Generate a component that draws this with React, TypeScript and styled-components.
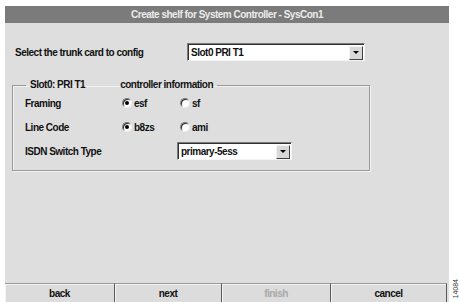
import styled, { createGlobalStyle } from "styled-components";

const GlobalStyle = createGlobalStyle`
  html, body {
    margin: 0;
    padding: 0;
    background: #ffffff;
  }
  body {
    font-family: "Liberation Sans", Arial, sans-serif;
  }
`;

const Page = styled.div`
  display: flex;
  align-items: flex-end;
  width: 459px;
  height: 302px;
  padding: 6px 0 0 5px;
  box-sizing: border-box;
`;

const Panel = styled.div`
  display: flex;
  flex-direction: column;
  width: 444px;
  height: 296px;
  background: #dedede;
  font-size: 10px;
  font-weight: bold;
  letter-spacing: -0.5px;
  color: #111;
`;

const TitleBar = styled.div`
  height: 17px;
  line-height: 17px;
  background: #7b7b7b;
  color: #ececec;
  text-align: center;
  letter-spacing: -0.5px;
`;

const TrunkRow = styled.div`
  display: flex;
  align-items: center;
  margin: 20px 0 0 10px;
  height: 18px;
`;

const TrunkLabel = styled.span`
  width: 172px;
`;

// fake win95 combo box
const Combo = styled.div<{ $w: number }>`
  display: flex;
  align-items: center;
  width: ${(p) => p.$w}px;
  height: 18px;
  box-sizing: border-box;
  background: #fff;
  border: 1px solid;
  border-color: #7a7a7a #f4f4f4 #f4f4f4 #7a7a7a;
  box-shadow: inset 1px 1px 0 #303030;
`;

const ComboText = styled.span`
  flex: 1;
  padding-left: 3px;
`;

const ComboButton = styled.span`
  display: flex;
  align-items: center;
  justify-content: center;
  width: 14px;
  height: 14px;
  margin-right: 1px;
  margin-top: 1px;
  box-sizing: border-box;
  background: #d8d8d8;
  border: 1px solid;
  border-color: #f4f4f4 #404040 #404040 #f4f4f4;
`;

const Arrow = styled.span`
  width: 0;
  height: 0;
  border-left: 3px solid transparent;
  border-right: 3px solid transparent;
  border-top: 3px solid #000;
`;

const Group = styled.fieldset`
  margin: 18px 0 0 7px;
  padding: 0 0 7px 12px;
  width: 358px;
  box-sizing: border-box;
  border: 1px solid #9a9a9a;
  box-shadow: 1px 1px 0 #f2f2f2, inset 1px 1px 0 #f2f2f2;
  min-width: 0;
`;

const Legend = styled.legend`
  display: flex;
  margin-left: 1px;
  padding: 0 4px 0 4px;
  line-height: 12px;
`;

const LegendSub = styled.span`
  margin-left: 35px;
`;

const Grid = styled.div`
  display: grid;
  grid-template-columns: 97px 58px 1fr;
  grid-auto-rows: 24px;
  align-items: center;
`;

const Option = styled.label`
  display: flex;
  align-items: center;
  gap: 2px;
`;

const Radio = styled.span<{ $on?: boolean }>`
  position: relative;
  width: 10px;
  height: 10px;
  box-sizing: border-box;
  border-radius: 50%;
  border: 1px solid;
  border-color: #7a7a7a #ececec #ececec #7a7a7a;
  background: #fff;
  box-shadow: inset 1px 1px 0 #2a2a2a;
  &::after {
    content: "";
    display: ${(p) => (p.$on ? "block" : "none")};
    position: absolute;
    left: 2px;
    top: 2px;
    width: 4px;
    height: 4px;
    border-radius: 50%;
    background: #000;
  }
`;

const ComboCell = styled.div`
  grid-column: 3;
  margin-left: -3px;
`;

const ButtonBar = styled.div`
  display: flex;
  margin-top: auto;
  height: 19px;
`;

const NavButton = styled.button<{ $w: number }>`
  width: ${(p) => p.$w}px;
  height: 19px;
  padding: 0;
  font: inherit;
  letter-spacing: inherit;
  color: ${(p) => (p.disabled ? "#a9a9a9" : "#111")};
  background: #dcdcdc;
  border: none;
  border-top: 1px solid #9a9a9a;
  border-right: 1px solid #5a5a5a;
  box-shadow: inset 1px 1px 0 #f4f4f4;
`;

const FigNumber = styled.span`
  writing-mode: vertical-rl;
  transform: rotate(180deg);
  margin: 0 0 4px 3px;
  font-family: "Liberation Sans", Arial, sans-serif;
  font-size: 7px;
  color: #333;
`;

export default function App() {
  return (
    <>
      <GlobalStyle />
      <Page>
        <Panel>
          <TitleBar>Create shelf for System Controller - SysCon1</TitleBar>
          <TrunkRow>
            <TrunkLabel>Select the trunk card to config</TrunkLabel>
            <Combo $w={178}>
              <ComboText>Slot0 PRI T1</ComboText>
              <ComboButton>
                <Arrow />
              </ComboButton>
            </Combo>
          </TrunkRow>
          <Group>
            <Legend>
              <span>Slot0: PRI T1</span>
              <LegendSub>controller information</LegendSub>
            </Legend>
            <Grid>
              <span>Framing</span>
              <Option>
                <Radio $on /> esf
              </Option>
              <Option>
                <Radio /> sf
              </Option>
              <span>Line Code</span>
              <Option>
                <Radio $on /> b8zs
              </Option>
              <Option>
                <Radio /> ami
              </Option>
              <span>ISDN Switch Type</span>
              <ComboCell>
                <Combo $w={115}>
                  <ComboText>primary-5ess</ComboText>
                  <ComboButton>
                    <Arrow />
                  </ComboButton>
                </Combo>
              </ComboCell>
            </Grid>
          </Group>
          <ButtonBar>
            <NavButton $w={110}>back</NavButton>
            <NavButton $w={107}>next</NavButton>
            <NavButton $w={109} disabled>
              finish
            </NavButton>
            <NavButton $w={116}>cancel</NavButton>
          </ButtonBar>
        </Panel>
        <FigNumber>14084</FigNumber>
      </Page>
    </>
  );
}
